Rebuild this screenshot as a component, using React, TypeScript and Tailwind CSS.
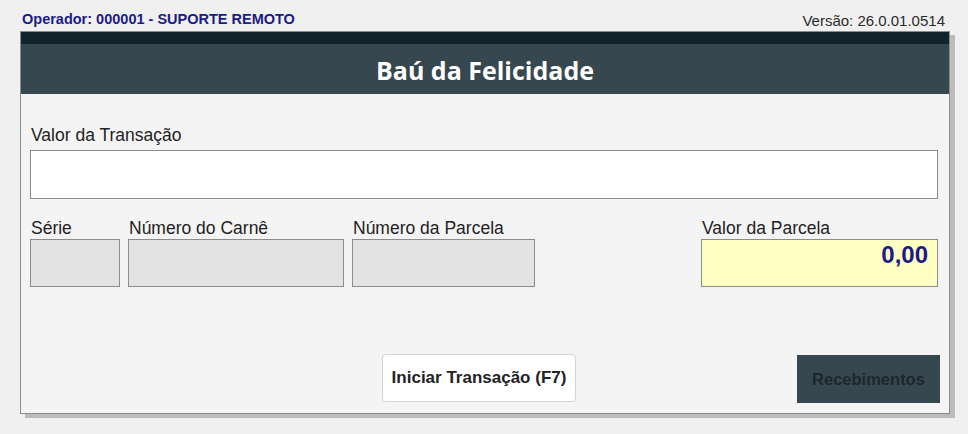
import React from "react";

const font = { fontFamily: '"Liberation Sans", Arial, sans-serif' };

const Field = ({
  label,
  className,
  children,
}: {
  label: string;
  className: string;
  children?: React.ReactNode;
}) => (
  <div className="flex flex-col">
    <span className="text-[17.5px] leading-[20px] text-[#222] pl-[1px]">{label}</span>
    <div className={`mt-[1px] h-[48px] border border-[#8c8c8c] ${className}`}>{children}</div>
  </div>
);

const App = () => {
  return (
    <div
      className="w-[968px] h-[434px] bg-[#f0f0f0] overflow-hidden"
      style={font}
    >
      {/* top bar */}
      <div className="h-[31px] flex items-start justify-between pl-[22px] pr-[23px] pt-[10px]">
        <span className="text-[14.5px] leading-[16px] font-bold text-[#1b1b86] mt-[1px]">
          Operador: 000001 - SUPORTE REMOTO
        </span>
        <span className="text-[15px] leading-[16px] mt-[3px] text-[#2a2a2a]">
          Versão: 26.0.01.0514
        </span>
      </div>

      {/* panel */}
      <div className="ml-[20px] w-[930px] h-[383px] border border-[#8c8c8c] bg-[#f4f4f5] shadow-[5px_4px_0_#bcbcbc] flex flex-col">
        <div className="h-[12px] bg-[#13232b]" />
        <div className="h-[50px] bg-[#37474f] flex items-center justify-center">
          <span
            className="text-white font-bold text-[25px] leading-none mt-[2px]"
            style={{ fontFamily: '"Open Sans", "Noto Sans", sans-serif' }}
          >
            Baú da Felicidade
          </span>
        </div>

        <div className="flex-1 flex flex-col pl-[9px] pr-[11px]">
          <span className="mt-[31px] text-[17.5px] leading-[20px] text-[#222] pl-[1px]">
            Valor da Transação
          </span>
          <div className="mt-[5px] h-[49px] bg-white border border-[#8c8c8c]" />

          <div className="mt-[19px] flex items-start">
            <div className="flex gap-[8px]">
              <Field label="Série" className="w-[90px] bg-[#e3e3e3]" />
              <Field label="Número do Carnê" className="w-[216px] bg-[#e3e3e3]" />
              <Field label="Número da Parcela" className="w-[183px] bg-[#e3e3e3]" />
            </div>
            <div className="ml-auto">
              <Field label="Valor da Parcela" className="w-[237px] bg-[#ffffc4] flex justify-end">
                <span className="mr-[9px] mt-[1px] text-[24px] leading-[28px] font-bold text-[#1b1b86]">
                  0,00
                </span>
              </Field>
            </div>
          </div>

          <div className="mt-[67px] flex items-start">
            <div className="flex-1" />
            <button className="w-[194px] h-[48px] bg-white border border-[#d4d4d4] rounded-[4px] text-[17px] font-bold text-[#222] mr-[12px]">
              Iniciar Transação (F7)
            </button>
            <div className="flex-1 flex justify-end -mr-[2px]">
              <button className="w-[143px] h-[48px] mt-[1px] bg-[#37474f] text-[16.5px] font-bold text-[#1c272d]">
                Recebimentos
              </button>
            </div>
          </div>
        </div>
      </div>
    </div>
  );
};

export default App;
